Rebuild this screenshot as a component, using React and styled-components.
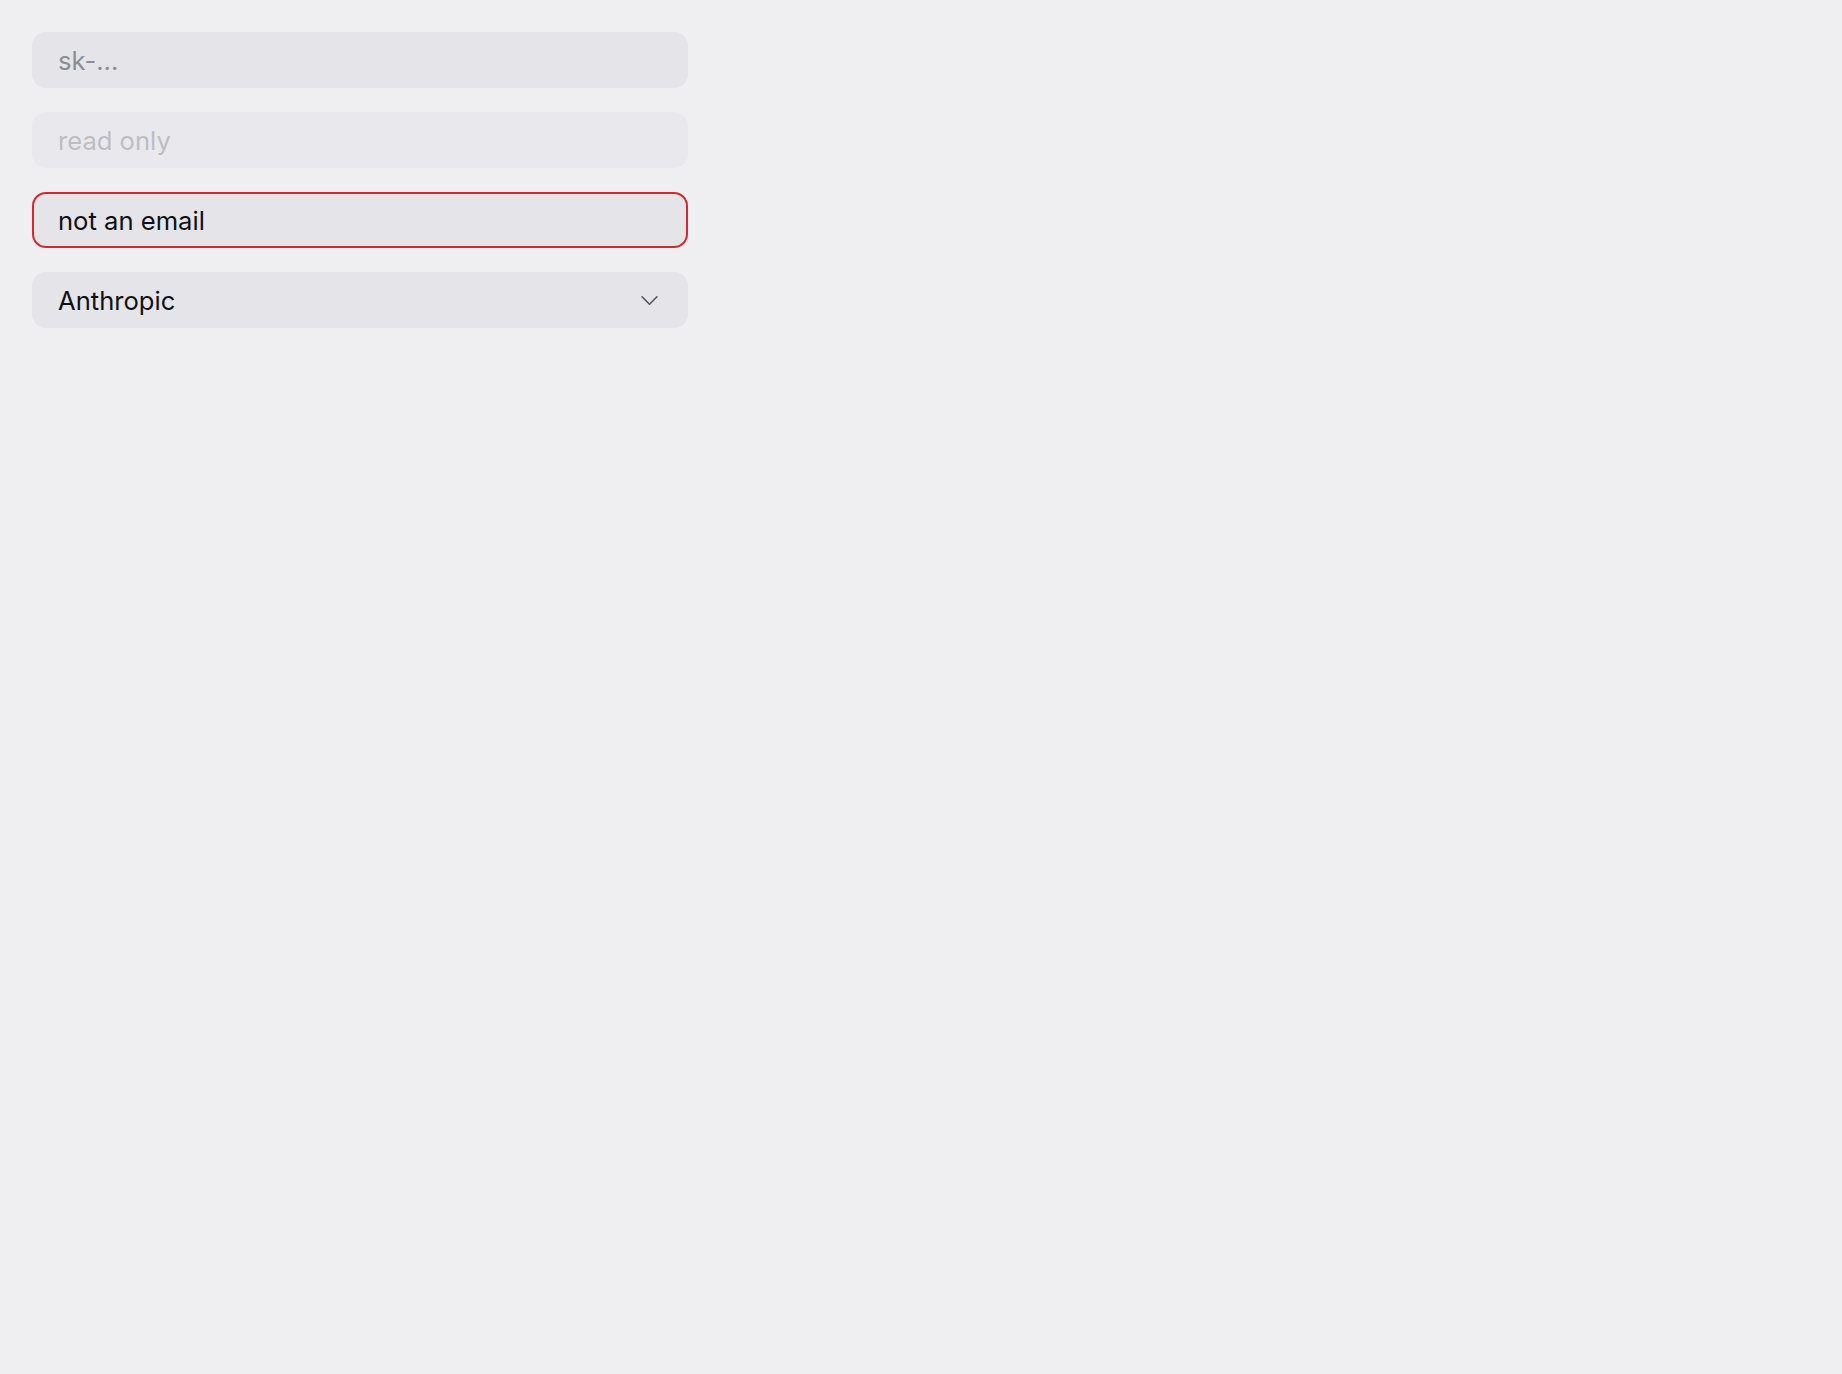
import styled, { createGlobalStyle, css } from "styled-components";

const GlobalStyle = createGlobalStyle`
	html, body {
		margin: 0;
		padding: 0;
		background: #efeff1;
		font-family: Inter, "Noto Sans", "Liberation Sans", sans-serif;
	}
	#root {
		min-height: 100vh;
	}
`;

const App = () => {
	return (
		<>
			<GlobalStyle />
			<Form>
				<Field type="password" placeholder="sk-..." />
				<Field type="text" placeholder="read only" readOnly $muted />
				<Field type="email" defaultValue="not an email" $invalid />
				<SelectWrap>
					<Select defaultValue="anthropic">
						<option value="anthropic">Anthropic</option>
						<option value="openai">OpenAI</option>
					</Select>
					<Chevron viewBox="0 0 16 9" fill="none">
						<path d="M1 1l7 7 7-7" stroke="#55555b" strokeWidth="1.5" strokeLinecap="round" strokeLinejoin="round" />
					</Chevron>
				</SelectWrap>
			</Form>
		</>
	);
};

export default App;

const Form = styled.div`
	display: flex;
	flex-direction: column;
	gap: 24.5px;
	width: 656px;
	padding: 32px;
`;

const fieldBase = css`
	box-sizing: border-box;
	width: 100%;
	height: 55.5px;
	padding: 2px 24px 0;
	border: 2px solid transparent;
	border-radius: 14px;
	background-color: #e4e4e9;
	font-family: Inter, "Noto Sans", "Liberation Sans", sans-serif;
	font-size: 25.6px;
	color: #111114;
	outline: none;
	appearance: none;
	&::placeholder {
		color: #8d8d93;
	}
`;

const Field = styled.input`
	${fieldBase}
	${p =>
		p.$muted &&
		css`
			background-color: #e9e9ed;
			&::placeholder {
				color: #bdbdc2;
			}
		`}
	${p =>
		p.$invalid &&
		css`
			border-color: #d9262b;
		`}
`;

const SelectWrap = styled.div`
	position: relative;
	width: 100%;
`;

const Select = styled.select`
	${fieldBase}
	cursor: pointer;
`;

const Chevron = styled.svg`
	position: absolute;
	right: 30px;
	top: 50%;
	width: 17px;
	height: 10px;
	transform: translateY(-45%);
	pointer-events: none;
`;
